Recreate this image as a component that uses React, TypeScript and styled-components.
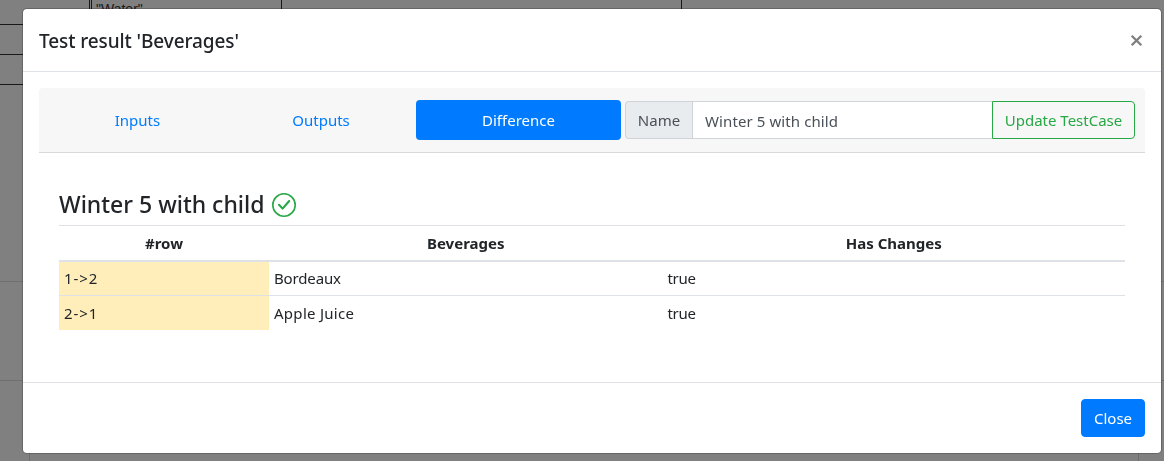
import React from 'react';
import styled, { createGlobalStyle } from 'styled-components';

const GlobalStyle = createGlobalStyle`
  *, *::before, *::after { box-sizing: border-box; }
  body {
    margin: 0;
    overflow: hidden;
    background: #808080;
    color: #212529;
    font: 400 15px/24px "Noto Sans", "Open Sans", sans-serif;
  }
`;

const Page = styled.div`
  height: 461px;
  display: flex;
  flex-direction: column;
  overflow: hidden;
`;

const SheetRow = styled.div<{ $height: number }>`
  display: flex;
  flex: none;
  width: 682px;
  height: ${p => p.$height}px;
  border-bottom: 1px solid #191919;
`;

const SheetCell = styled.div<{ $width: number }>`
  flex: none;
  width: ${p => p.$width}px;
  border-right: 1px solid #191919;
  font: 14px/18px "Liberation Sans", sans-serif;
  color: #191919;
`;

const SheetText = styled.span`
  padding-left: 4px;
`;

const PageSection = styled.div<{ $height: number }>`
  flex: none;
  height: ${p => p.$height}px;
  border-bottom: 1px solid #6f6f6f;
`;

const PagePanel = styled.div`
  flex: 1;
  margin: 0 25px 0 29px;
  border: solid #6f6f6f;
  border-width: 0 1px;
`;

const Overlay = styled.div`
  position: fixed;
  inset: 0;
  padding: 8px 2px 7px 22px;
`;

const Dialog = styled.section`
  width: 1140px;
  height: 446px;
  display: flex;
  flex-direction: column;
  background: #fff;
  background-clip: padding-box;
  border: 1px solid rgba(0, 0, 0, 0.2);
  border-radius: 4.8px;
`;

const DialogHeader = styled.header`
  flex: none;
  height: 63px;
  display: flex;
  align-items: center;
  justify-content: space-between;
  padding: 0 18px 0 16px;
  border-bottom: 1px solid #dee2e6;
`;

const DialogTitle = styled.h5`
  margin: 0;
  padding-top: 2px;
  font-size: 19px;
  font-weight: 500;
  line-height: 30px;
  letter-spacing: -0.1px;
`;

const DismissButton = styled.button`
  display: flex;
  padding: 0;
  border: 0;
  background: none;
`;

const DialogBody = styled.div`
  flex: 1;
  padding: 16px;
`;

const Toolbar = styled.div`
  height: 65px;
  display: flex;
  align-items: center;
  padding: 0 10px 0 0;
  background: #f7f7f7;
  border-bottom: 1px solid #d8d9da;
  border-radius: 4px 4px 0 0;
`;

const Tabs = styled.nav`
  display: flex;
  margin-right: 4px;
  padding-left: 10px;
`;

const Tab = styled.a<{ $width: number; $active?: boolean }>`
  width: ${p => p.$width}px;
  height: 40px;
  padding: 8px 0;
  border-radius: 4px;
  text-align: center;
  color: ${p => (p.$active ? '#fff' : '#007bff')};
  background: ${p => (p.$active ? '#007bff' : 'transparent')};
`;

const InputGroup = styled.div`
  flex: 1;
  display: flex;
  height: 38px;
`;

const GroupLabel = styled.label`
  width: 67px;
  padding: 6px 0;
  text-align: center;
  color: #495057;
  background: #e9ecef;
  border: 1px solid #ced4da;
  border-right: 0;
  border-radius: 4px 0 0 4px;
`;

const NameField = styled.div`
  flex: 1;
  padding: 7px 12px 5px;
  letter-spacing: 0.1px;
  color: #495057;
  background: #fff;
  border: 1px solid #ced4da;
  border-right: 0;
`;

const Button = styled.button<{ $outline?: boolean; $width: number }>`
  width: ${p => p.$width}px;
  height: 38px;
  padding: 0;
  font: inherit;
  color: ${p => (p.$outline ? '#28a745' : '#fff')};
  background: ${p => (p.$outline ? 'transparent' : '#007bff')};
  border: 1px solid ${p => (p.$outline ? '#28a745' : '#007bff')};
  border-radius: ${p => (p.$outline ? '0 4px 4px 0' : '4px')};
`;

const Result = styled.div`
  padding: 37px 20px 0;
`;

const ResultTitle = styled.h4`
  display: flex;
  align-items: center;
  gap: 7px;
  height: 29px;
  margin: 0 0 6px;
  font-size: 23px;
  font-weight: 500;
  line-height: 29px;
`;

const Table = styled.table`
  width: 100%;
  table-layout: fixed;
  border-spacing: 0;
`;

const HeadCell = styled.th<{ $width?: string }>`
  width: ${p => p.$width ?? 'auto'};
  height: 37px;
  padding: 0 5px;
  font-weight: 700;
  text-align: center;
  border-top: 1px solid #dee2e6;
  border-bottom: 2px solid #dee2e6;
`;

const Cell = styled.td<{ $moved?: boolean; $first?: boolean; $spacing?: number }>`
  height: ${p => (p.$first ? 33 : 35)}px;
  padding: ${p => (p.$first ? '0 5px 2px' : '0 5px')};
  letter-spacing: ${p => p.$spacing ?? 0}px;
  background: ${p => (p.$moved ? '#ffeeba' : 'transparent')};
  border-top: ${p => (p.$first ? '0' : '1px solid #dee2e6')};
`;

const DialogFooter = styled.footer`
  flex: none;
  height: 71px;
  display: flex;
  align-items: center;
  justify-content: flex-end;
  padding: 0 16px;
  border-top: 1px solid #dee2e6;
`;

const rows = [
  { move: '1->2', beverage: 'Bordeaux', changed: 'true', spacing: -0.15 },
  { move: '2->1', beverage: 'Apple Juice', changed: 'true', spacing: 0.28 },
];

function CheckCircle() {
  return (
    <svg width="24" height="24" viewBox="0 0 24 24" fill="none" stroke="#28a745">
      <circle cx="12" cy="12" r="11.2" strokeWidth="1.6" />
      <path d="M7 11.8 10.6 15.6 17.2 8" strokeWidth="2.1" strokeLinecap="round" strokeLinejoin="round" />
    </svg>
  );
}

export default function App() {
  return (
    <>
      <GlobalStyle />
      <Page>
        <SheetRow $height={25}>
          <SheetCell $width={90} />
          <SheetCell $width={2} />
          <SheetCell $width={190}>
            <SheetText>"Water"</SheetText>
          </SheetCell>
          <SheetCell $width={400} />
        </SheetRow>
        <SheetRow $height={30} />
        <SheetRow $height={30} />
        <PageSection $height={197} />
        <PageSection $height={99} />
        <PagePanel />
      </Page>
      <Overlay>
        <Dialog role="dialog">
          <DialogHeader>
            <DialogTitle>Test result 'Beverages'</DialogTitle>
            <DismissButton aria-label="Close">
              <svg width="13" height="13" viewBox="0 0 13 13" stroke="#7f7f7f" strokeWidth="2.3">
                <path d="m1.7 1.7 9.6 9.6M11.3 1.7 1.7 11.3" />
              </svg>
            </DismissButton>
          </DialogHeader>
          <DialogBody>
            <Toolbar>
              <Tabs>
                <Tab $width={177}>Inputs</Tab>
                <Tab $width={190}>Outputs</Tab>
                <Tab $width={205} $active>Difference</Tab>
              </Tabs>
              <InputGroup>
                <GroupLabel>Name</GroupLabel>
                <NameField>Winter 5 with child</NameField>
                <Button $outline $width={143}>Update TestCase</Button>
              </InputGroup>
            </Toolbar>
            <Result>
              <ResultTitle>
                Winter 5 with child
                <CheckCircle />
              </ResultTitle>
              <Table>
                <thead>
                  <tr>
                    <HeadCell $width="210px">#row</HeadCell>
                    <HeadCell $width="393.5px">Beverages</HeadCell>
                    <HeadCell>Has Changes</HeadCell>
                  </tr>
                </thead>
                <tbody>
                  {rows.map((row, i) => (
                    <tr key={row.move}>
                      <Cell $moved $first={i === 0} $spacing={0.9}>{row.move}</Cell>
                      <Cell $first={i === 0} $spacing={row.spacing}>{row.beverage}</Cell>
                      <Cell $first={i === 0} $spacing={-0.3}>{row.changed}</Cell>
                    </tr>
                  ))}
                </tbody>
              </Table>
            </Result>
          </DialogBody>
          <DialogFooter>
            <Button $width={64}>Close</Button>
          </DialogFooter>
        </Dialog>
      </Overlay>
    </>
  );
}
